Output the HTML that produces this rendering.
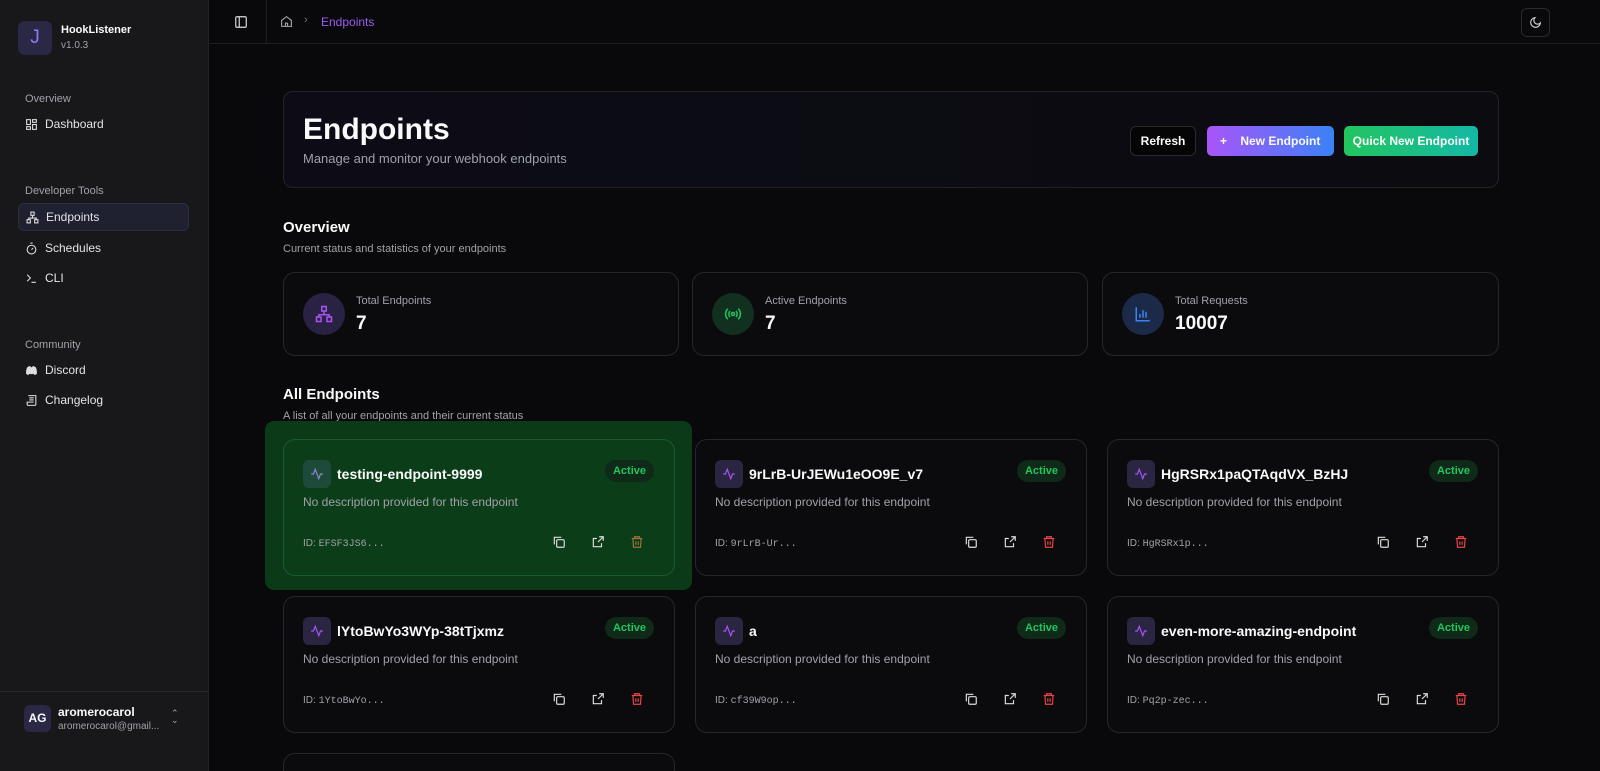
<!DOCTYPE html>
<html style="overflow:hidden;height:771px"><head><meta charset="utf-8"><style>
*{box-sizing:border-box;margin:0;padding:0}
body{width:1600px;height:771px;overflow:hidden;background:#09090b;font-family:"Liberation Sans",sans-serif;color:#fafafa}
#w{position:relative;width:1600px;height:771px;overflow:hidden;background:#09090b}
.sb{position:absolute;left:0;top:0;width:209px;height:771px;background:#18181b;border-right:1px solid #222}
.abs{position:absolute}
.lbl{font-size:11px;color:#a1a1aa}
.nav{position:absolute;left:18px;width:171px;height:28px;display:flex;align-items:center;padding-left:7px;font-size:12px;color:#e4e4e7;gap:7px}
.nav svg{width:13px;height:13px}
.card{position:absolute;width:392px;height:137px;border:1px solid #26262b;border-radius:12px;background:#0b0b0d}
.ic{position:absolute;left:19px;top:20px;width:28px;height:28px;border-radius:6px;background:#2a2540;display:flex;align-items:center;justify-content:center}
.ttl{position:absolute;left:53px;top:26px;font-size:14px;font-weight:bold;color:#fafafa}
.badge{position:absolute;right:20px;top:20px;width:49px;height:22px;border-radius:11px;background:#0f2a18;color:#22c55e;font-size:11px;font-weight:bold;display:flex;align-items:center;justify-content:center}
.desc{position:absolute;left:19px;top:55px;font-size:12px;color:#a1a1aa}
.id{position:absolute;left:19px;top:98px;font-size:10px;color:#a1a1aa;font-family:"Liberation Mono",monospace}
.id b{font-family:"Liberation Sans";font-weight:normal}
.acts{position:absolute;top:95px;left:268px;display:flex;gap:25px}
.acts svg{width:14px;height:14px}
.stat{position:absolute;top:272px;height:84px;border:1px solid #26262b;border-radius:12px;background:#0b0b0d}
.stat .c{position:absolute;left:19px;top:20px;width:42px;height:42px;border-radius:50%;display:flex;align-items:center;justify-content:center}
.stat .l{position:absolute;left:72px;top:22px;font-size:11px;color:#a1a1aa}
.stat .v{position:absolute;left:72px;top:40px;font-size:19px;font-weight:bold}
</style></head><body><div id="w">
<div class="sb">
 <div class="abs" style="left:18px;top:21px;width:34px;height:34px;border-radius:7px;background:#2a2845;color:#8b7cf6;font-size:19px;text-align:center;line-height:34px">J</div>
 <div class="abs" style="left:61px;top:24px;font-size:11px;font-weight:bold">HookListener</div>
 <div class="abs" style="left:61px;top:40px;font-size:10px;color:#a1a1aa">v1.0.3</div>
 <div class="abs lbl" style="left:25px;top:93px">Overview</div>
 <div class="nav" style="top:110px"><svg viewBox="0 0 24 24" fill="none" stroke="#ddd" stroke-width="2"><rect x="3" y="3" width="7" height="9"/><rect x="14" y="3" width="7" height="5"/><rect x="14" y="12" width="7" height="9"/><rect x="3" y="16" width="7" height="5"/></svg>Dashboard</div>
 <div class="abs lbl" style="left:25px;top:185px">Developer Tools</div>
 <div class="nav" style="top:203px;background:#1f2030;border:1px solid #2d2e40;border-radius:6px"><svg viewBox="0 0 24 24" fill="none" stroke="#ddd" stroke-width="2"><rect x="9" y="2" width="6" height="6"/><rect x="2" y="16" width="6" height="6"/><rect x="16" y="16" width="6" height="6"/><path d="M5 16v-3h14v3M12 8v5"/></svg>Endpoints</div>
 <div class="nav" style="top:234px"><svg viewBox="0 0 24 24" fill="none" stroke="#ddd" stroke-width="2"><circle cx="12" cy="14" r="8"/><path d="M10 2h4M12 14l3-3"/></svg>Schedules</div>
 <div class="nav" style="top:264px"><svg viewBox="0 0 24 24" fill="none" stroke="#ddd" stroke-width="2"><path d="M4 17l6-6-6-6M12 19h8"/></svg>CLI</div>
 <div class="abs lbl" style="left:25px;top:339px">Community</div>
 <div class="nav" style="top:356px"><svg viewBox="0 0 24 24" fill="#ddd"><path d="M4 6c3-2 5-2 6-2l1 2h2l1-2c1 0 3 0 6 2 2 4 2 8 2 12-2 2-4 2-5 2l-1-2c-2 1-6 1-8 0l-1 2c-1 0-3 0-5-2 0-4 0-8 2-12z"/></svg>Discord</div>
 <div class="nav" style="top:386px"><svg viewBox="0 0 24 24" fill="none" stroke="#ddd" stroke-width="2"><path d="M6 3h14v16a2 2 0 0 1-2 2H6a2 2 0 0 1-2-2v-4h12M8 7h8M8 11h8"/></svg>Changelog</div>
 <div class="abs" style="left:0;top:691px;width:209px;border-top:1px solid #26262b"></div>
 <div class="abs" style="left:24px;top:705px;width:27px;height:27px;border-radius:6px;background:#2a2845;font-size:12px;font-weight:bold;text-align:center;line-height:27px">AG</div>
 <div class="abs" style="left:58px;top:705px;font-size:12px;font-weight:bold">aromerocarol</div>
 <div class="abs" style="left:58px;top:721px;font-size:10px;color:#a1a1aa">aromerocarol@gmail...</div>
 <div class="abs" style="left:171px;top:710px;font-size:9px;color:#aaa;line-height:7px">⌃<br>⌄</div>
</div>
<div class="abs" style="left:210px;top:0;width:1390px;height:44px;border-bottom:1px solid #1f1f23"></div>
<div class="abs" style="left:266px;top:0;height:44px;border-left:1px solid #1f1f23"></div>
<svg class="abs" style="left:234px;top:15px" width="14" height="14" viewBox="0 0 24 24" fill="none" stroke="#ddd" stroke-width="2"><rect x="3" y="3" width="18" height="18" rx="2"/><path d="M9 3v18"/></svg>
<svg class="abs" style="left:280px;top:15px" width="13" height="13" viewBox="0 0 24 24" fill="none" stroke="#aaa" stroke-width="2"><path d="M3 10l9-7 9 7v11H3z M10 21v-6h4v6"/></svg>
<div class="abs" style="left:304px;top:14px;font-size:11px;color:#777">›</div>
<div class="abs" style="left:321px;top:15px;font-size:12px;color:#9d5cf0">Endpoints</div>
<div class="abs" style="left:1521px;top:8px;width:29px;height:29px;border:1px solid #2a2a2e;border-radius:6px"></div>
<svg class="abs" style="left:1529px;top:16px" width="13" height="13" viewBox="0 0 24 24" fill="none" stroke="#ddd" stroke-width="2"><path d="M21 13A9 9 0 1 1 11 3a7 7 0 0 0 10 10z"/></svg>

<div class="abs" style="left:283px;top:91px;width:1216px;height:97px;border:1px solid #222228;border-radius:10px;background:linear-gradient(90deg,#0d0c16,#0b0b10)"></div>
<div class="abs" style="left:303px;top:113px;font-size:30px;font-weight:bold">Endpoints</div>
<div class="abs" style="left:303px;top:151px;font-size:13px;color:#a1a1aa">Manage and monitor your webhook endpoints</div>
<div class="abs" style="left:1130px;top:126px;width:66px;height:30px;border:1px solid #2a2a2e;border-radius:6px;background:#050505;font-size:12px;font-weight:bold;text-align:center;line-height:28px">Refresh</div>
<div class="abs" style="left:1207px;top:126px;width:127px;height:30px;border-radius:5px;background:linear-gradient(90deg,#a855f7,#3b82f6);font-size:12px;font-weight:bold;line-height:30px;padding-left:13px">+&nbsp;&nbsp;&nbsp;&nbsp;New Endpoint</div>
<div class="abs" style="left:1344px;top:126px;width:134px;height:30px;border-radius:5px;background:linear-gradient(90deg,#22c55e,#14b8a6);font-size:12px;font-weight:bold;line-height:30px;text-align:center">Quick New Endpoint</div>

<div class="abs" style="left:283px;top:219px;font-size:15px;font-weight:bold">Overview</div>
<div class="abs" style="left:283px;top:243px;font-size:11px;color:#a1a1aa">Current status and statistics of your endpoints</div>
<div class="stat" style="left:283px;width:396px"><div class="c" style="background:#2a2242"><svg width="18" height="18" viewBox="0 0 24 24" fill="none" stroke="#a855f7" stroke-width="2"><rect x="9" y="2" width="6" height="6"/><rect x="2" y="16" width="6" height="6"/><rect x="16" y="16" width="6" height="6"/><path d="M5 16v-3h14v3M12 8v5"/></svg></div><div class="l">Total Endpoints</div><div class="v">7</div></div>
<div class="stat" style="left:692px;width:396px"><div class="c" style="background:#113020"><svg width="18" height="18" viewBox="0 0 24 24" fill="none" stroke="#22c55e" stroke-width="2"><circle cx="12" cy="12" r="2"/><path d="M8 8a6 6 0 0 0 0 8M16 8a6 6 0 0 1 0 8M5 5a10 10 0 0 0 0 14M19 5a10 10 0 0 1 0 14"/></svg></div><div class="l">Active Endpoints</div><div class="v">7</div></div>
<div class="stat" style="left:1102px;width:397px"><div class="c" style="background:#1c2a4a"><svg width="18" height="18" viewBox="0 0 24 24" fill="none" stroke="#3b82f6" stroke-width="2"><path d="M3 3v18h18M8 17v-5M12 17V7M16 17v-8"/></svg></div><div class="l">Total Requests</div><div class="v">10007</div></div>

<div class="abs" style="left:283px;top:386px;font-size:15px;font-weight:bold">All Endpoints</div>
<div class="abs" style="left:283px;top:410px;font-size:11px;color:#a1a1aa">A list of all your endpoints and their current status</div>
<div class="abs" style="left:265px;top:421px;width:427px;height:169px;border-radius:9px;background:#0a3a17"></div>

<div id="cards"></div>
</div>
<script>
const d=[["testing-endpoint-9999","EFSF3JS6...",283,439,1],["9rLrB-UrJEWu1eOO9E_v7","9rLrB-Ur...",695,439],["HgRSRx1paQTAqdVX_BzHJ","HgRSRx1p...",1107,439],["lYtoBwYo3WYp-38tTjxmz","1YtoBwYo...",283,596],["a","cf39W9op...",695,596],["even-more-amazing-endpoint","Pq2p-zec...",1107,596],["","",283,753]];
let h="";
for(const [t,i,x,y,g] of d){
 const bg=g?"background:#0b3d18;border-color:#1d5a2a":"";
 const tr=g?"#a07040":"#ef4444";
 h+=`<div class="card" style="left:${x}px;top:${y}px;${bg}${t?'':';height:30px'}">`+(t?`<div class="ic" style="${g?'background:#1e4a3a':''}"><svg width="14" height="14" viewBox="0 0 24 24" fill="none" stroke="${g?'#8a8ad0':'#a855f7'}" stroke-width="2"><path d="M2 12h4l3-8 6 16 3-8h4"/></svg></div><div class="ttl">${t}</div><div class="badge">Active</div><div class="desc">No description provided for this endpoint</div><div class="id"><b>ID: </b>${i}</div><div class="acts"><svg viewBox="0 0 24 24" fill="none" stroke="#ddd" stroke-width="2"><rect x="8" y="8" width="13" height="13" rx="2"/><path d="M4 16V4h12"/></svg><svg viewBox="0 0 24 24" fill="none" stroke="#ddd" stroke-width="2"><path d="M14 3h7v7M21 3l-9 9M18 14v6H4V6h6"/></svg><svg viewBox="0 0 24 24" fill="none" stroke="${tr}" stroke-width="2"><path d="M3 6h18M8 6V3h8v3M5 6l1 15h12l1-15M10 11v6M14 11v6"/></svg></div>`:"")+`</div>`;
}
document.getElementById("cards").innerHTML=h;
</script>
</body></html>
